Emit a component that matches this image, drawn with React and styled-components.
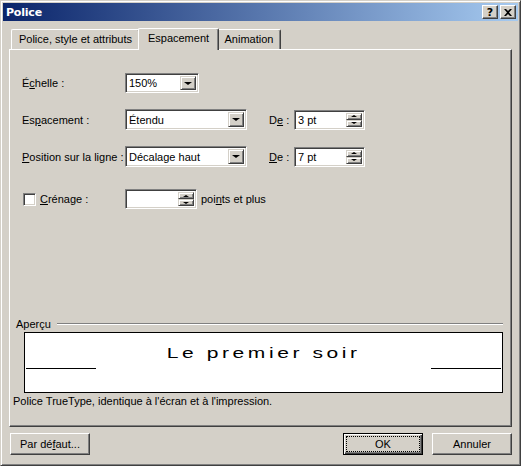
import React from "react"
import styled, { createGlobalStyle } from "styled-components"

const face = "#d4d0c8"
const shadow = "#808080"
const dark = "#404040"

const Global = createGlobalStyle`
  html, body { margin: 0; padding: 0; background: ${face}; }
  body {
    font-family: "Liberation Sans", Arial, sans-serif;
    font-size: 11px;
    color: #000;
  }
  u { text-decoration: underline; text-underline-offset: 1px; }
`

const Window = styled.div`
  width: 521px;
  height: 466px;
  box-sizing: border-box;
  background: ${face};
  border: 1px solid;
  border-color: ${face} ${dark} ${dark} ${face};
  box-shadow: inset 1px 1px #fff, inset -1px -1px ${shadow};
  padding: 2px;
  display: flex;
  flex-direction: column;
`

const TitleBar = styled.div`
  height: 18px;
  display: flex;
  align-items: center;
  padding: 0 2px 0 2px;
  background: linear-gradient(to right, #0a246a, #a6caf0);
  color: #fff;
  font-family: "DejaVu Sans", Verdana, sans-serif;
  font-weight: bold;
  font-size: 11px;
`

const Title = styled.div`
  flex: 1;
  padding-left: 1px;
  letter-spacing: -0.2px;
`

const CapButton = styled.div`
  width: 16px;
  height: 14px;
  box-sizing: border-box;
  background: ${face};
  border: 1px solid;
  border-color: #fff ${dark} ${dark} #fff;
  box-shadow: inset -1px -1px ${shadow};
  margin-left: ${p => p.$gap || 0}px;
  display: flex;
  align-items: center;
  justify-content: center;
  color: #000;
  font-size: 11px;
  font-weight: bold;
  font-family: "DejaVu Sans", sans-serif;
  line-height: 1;
`

const Body = styled.div`
  flex: 1;
  display: flex;
  flex-direction: column;
  padding: 8px 6px 0 6px;
`

const TabRow = styled.div`
  display: flex;
  align-items: flex-end;
  height: 21px;
  padding-left: 2px;
  position: relative;
  z-index: 1;
`

const Tab = styled.div`
  position: relative;
  box-sizing: border-box;
  width: ${p => p.$w}px;
  height: ${p => (p.$active ? 22 : 20)}px;
  margin: ${p => (p.$active ? "0 -2px 0 -2px" : "0 0 1px 0")};
  padding-top: 3px;
  text-align: center;
  background: ${face};
  border-top: 1px solid #fff;
  border-left: 1px solid #fff;
  border-right: 1px solid ${dark};
  border-top-left-radius: 2px;
  border-top-right-radius: 2px;
  box-shadow: inset -1px 0 ${shadow};
  z-index: ${p => (p.$active ? 2 : 1)};
  white-space: nowrap;
`

const Panel = styled.div`
  height: 378px;
  box-sizing: border-box;
  margin-top: -1px;
  border: 1px solid;
  border-color: #fff ${dark} ${dark} #fff;
  box-shadow: inset -1px -1px ${shadow};
  display: flex;
  flex-direction: column;
  padding: 0 9px 19px 12px;
`

const Row = styled.div`
  display: flex;
  align-items: center;
  height: ${p => p.$h || 20}px;
  margin-top: ${p => p.$top}px;
`

const Label = styled.div`
  width: ${p => p.$w || 103}px;
  flex: none;
  margin-left: ${p => p.$ml || 0}px;
  white-space: nowrap;
`

const Sunken = styled.div`
  box-sizing: border-box;
  width: ${p => p.$w}px;
  height: ${p => p.$h || 20}px;
  background: #fff;
  border: 1px solid;
  border-color: ${shadow} #fff #fff ${shadow};
  box-shadow: inset 1px 1px ${dark}, inset -1px -1px ${face};
  padding: 2px;
  display: flex;
  align-items: stretch;
`

const FieldText = styled.div`
  flex: 1;
  padding-left: 1px;
  display: flex;
  align-items: center;
  white-space: nowrap;
`

const RaisedBtn = styled.div`
  width: 16px;
  box-sizing: border-box;
  background: ${face};
  border: 1px solid;
  border-color: ${face} ${dark} ${dark} ${face};
  box-shadow: inset 1px 1px #fff, inset -1px -1px ${shadow};
  display: flex;
  align-items: center;
  justify-content: center;
`

const SpinCol = styled.div`
  display: flex;
  flex-direction: column;
  width: 16px;
  & > div { flex: 1; }
`

const Arrow = styled.div`
  width: 0;
  height: 0;
  border-left: ${p => p.$s}px solid transparent;
  border-right: ${p => p.$s}px solid transparent;
  ${p => (p.$up ? "border-bottom" : "border-top")}: ${p => p.$s - 1 || 3}px solid #000;
`

const Check = styled.div`
  width: 13px;
  height: 13px;
  box-sizing: border-box;
  background: #fff;
  border: 1px solid;
  border-color: ${shadow} #fff #fff ${shadow};
  box-shadow: inset 1px 1px ${dark}, inset -1px -1px ${face};
  margin: 0 4px 0 1px;
`

const After = styled.div`
  margin-left: 4px;
`

const Spacer = styled.div`
  flex: 1;
`

const GroupHead = styled.div`
  display: flex;
  align-items: center;
  margin-left: -6px;
  margin-right: -1px;
`

const Etched = styled.div`
  flex: 1;
  height: 0;
  border-top: 1px solid ${shadow};
  border-bottom: 1px solid #fff;
  margin-left: 6px;
`

const Preview = styled.div`
  height: 61px;
  box-sizing: border-box;
  margin: 2px -1px 0 2px;
  background: #fff;
  border: 1px solid #000;
  display: flex;
  align-items: flex-start;
  padding: 0 1px;
`

const BaseLine = styled.div`
  width: 70px;
  height: 1px;
  background: #000;
  margin-top: 35px;
`

const Sample = styled.div`
  flex: 1;
  text-align: center;
  font-family: "Liberation Sans", Arial, sans-serif;
  font-size: 14px;
  padding-top: 12px;
  & span {
    display: inline-block;
    transform: scaleX(1.5);
    letter-spacing: 2.4px;
  }
`

const Note = styled.div`
  margin: 2px 0 0 -9px;
`

const Footer = styled.div`
  display: flex;
  align-items: center;
  padding: 6px 0 0 1px;
`

const Button = styled.div`
  width: 80px;
  height: 22px;
  box-sizing: border-box;
  background: ${face};
  border: 1px solid;
  border-color: #fff ${dark} ${dark} #fff;
  box-shadow: inset -1px -1px ${shadow};
  display: flex;
  align-items: center;
  justify-content: center;
  margin-left: ${p => p.$ml || 0}px;
  ${p => p.$default && `
    border: 1px solid #000;
    box-shadow: inset 1px 1px #fff, inset -1px -1px ${dark}, inset -2px -2px ${shadow};
  `}
`

const Focus = styled.div`
  position: absolute;
  inset: 3px;
  border: 1px dotted #000;
`

const DefaultWrap = styled.div`
  position: relative;
`

const Select = ({ w, h = 21, value }) => (
  <Sunken $w={w} $h={h}>
    <FieldText>{value}</FieldText>
    <RaisedBtn>
      <Arrow $s={4} />
    </RaisedBtn>
  </Sunken>
)

const Spin = ({ w, value }) => (
  <Sunken $w={w} $h={20}>
    <FieldText>{value}</FieldText>
    <SpinCol>
      <RaisedBtn><Arrow $up $s={3} /></RaisedBtn>
      <RaisedBtn><Arrow $s={3} /></RaisedBtn>
    </SpinCol>
  </Sunken>
)

export default function App() {
  return (
    <Window>
      <Global />
      <TitleBar>
        <Title>Police</Title>
        <CapButton>?</CapButton>
        <CapButton $gap={2}>
          <svg width="8" height="7" viewBox="0 0 8 7">
            <path d="M0 0h2l2 2 2-2h2L5 3.5 8 7H6L4 5 2 7H0l3-3.5z" fill="#000" />
          </svg>
        </CapButton>
      </TitleBar>
      <Body>
        <TabRow>
          <Tab $w={129}>Police, style et attributs</Tab>
          <Tab $w={81} $active>Espacement</Tab>
          <Tab $w={64}>Animation</Tab>
        </TabRow>
        <Panel>
          <Row $top={23}>
            <Label>É<u>c</u>helle :</Label>
            <Select w={74} h={20} value="150%" />
          </Row>
          <Row $top={16} $h={21}>
            <Label>Es<u>p</u>acement :</Label>
            <Select w={122} value="Étendu" />
            <Label $w={25} $ml={22}>D<u>e</u> :</Label>
            <Spin w={71} value="3 pt" />
          </Row>
          <Row $top={16} $h={21}>
            <Label><u>P</u>osition sur la ligne :</Label>
            <Select w={122} value="Décalage haut" />
            <Label $w={25} $ml={22}><u>D</u>e :</Label>
            <Spin w={71} value="7 pt" />
          </Row>
          <Row $top={22}>
            <Label>
              <Row $h={13} $top={0}>
                <Check />
                <span><u>C</u>rénage :</span>
              </Row>
            </Label>
            <Spin w={72} value="" />
            <After>poi<u>n</u>ts et plus</After>
          </Row>
          <Spacer />
          <GroupHead>
            <span>Aperçu</span>
            <Etched />
          </GroupHead>
          <Preview>
            <BaseLine />
            <Sample><span>Le premier soir</span></Sample>
            <BaseLine />
          </Preview>
          <Note>Police TrueType, identique à l'écran et à l'impression.</Note>
        </Panel>
        <Footer>
          <Button>Par dé<u>f</u>aut...</Button>
          <Spacer />
          <DefaultWrap>
            <Button $default>OK</Button>
            <Focus />
          </DefaultWrap>
          <Button $ml={9}>Annuler</Button>
        </Footer>
      </Body>
    </Window>
  )
}
